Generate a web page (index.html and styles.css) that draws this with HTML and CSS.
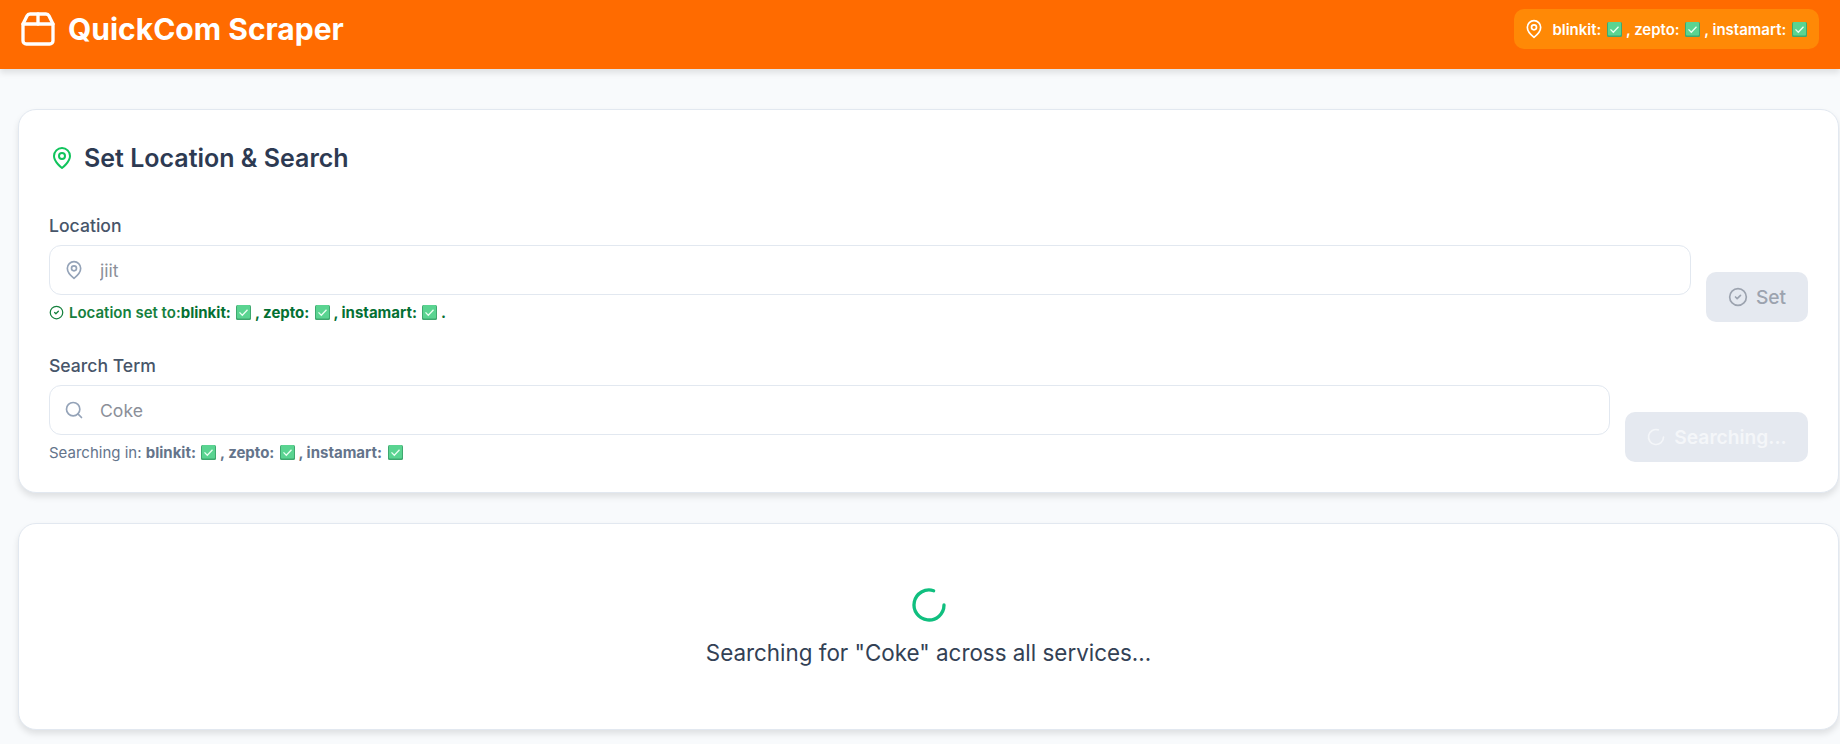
FILE: index.html
```html
<!DOCTYPE html>
<html lang="en">
<head>
    <meta charset="UTF-8">
    <meta name="viewport" content="width=device-width, initial-scale=1.0">
    <title>QuickCom Scraper</title>
    <link rel="stylesheet" href="styles.css">
</head>
<body>
    <!-- shared icons -->
    <svg class="icon-defs" aria-hidden="true">
        <symbol id="pin" viewBox="0 0 24 24"><path d="M20 10c0 6-8 12-8 12s-8-6-8-12a8 8 0 0 1 16 0Z"/><circle cx="12" cy="10" r="3"/></symbol>
        <symbol id="tick" viewBox="0 0 15 15">
            <rect x="0" y="0" width="15" height="15" rx="1.5" fill="#3fa86f" stroke="none"/>
            <rect x="1" y="0" width="13" height="13.5" rx="1" fill="#5ad491" stroke="none"/>
            <path d="M3.5 7.4 6.3 10.2 11.5 4.8" fill="none" stroke="#eafff2" stroke-width="1.3"/>
        </symbol>
    </svg>

    <header class="topbar">
        <div class="brand">
            <svg class="icon brand-icon" viewBox="0 0 24 24"><path d="M3 9h18v10a2 2 0 0 1-2 2H5a2 2 0 0 1-2-2V9Z"/><path d="m3 9 2.45-4.9A2 2 0 0 1 7.24 3h9.52a2 2 0 0 1 1.8 1.1L21 9"/><path d="M12 3v6"/></svg>
            <h1>QuickCom Scraper</h1>
        </div>
        <div class="status-badge">
            <svg class="icon badge-pin"><use href="#pin"/></svg>
            <span>blinkit: <svg class="tick"><use href="#tick"/></svg> , zepto: <svg class="tick"><use href="#tick"/></svg> , instamart: <svg class="tick"><use href="#tick"/></svg></span>
        </div>
    </header>

    <main class="content">
        <section class="card search-card">
            <h2><svg class="icon title-pin"><use href="#pin"/></svg>Set Location &amp; Search</h2>

            <div class="form-row">
                <div class="form-group">
                    <label for="location">Location</label>
                    <div class="input-wrap">
                        <svg class="icon input-icon"><use href="#pin"/></svg>
                        <input type="text" id="location" value="jiit" disabled>
                    </div>
                    <p class="hint success">
                        <svg class="icon hint-icon" viewBox="0 0 24 24"><circle cx="12" cy="12" r="10"/><path d="m9 12 2 2 4-4"/></svg>
                        <span>Location set to:<b>blinkit: <svg class="tick"><use href="#tick"/></svg> , zepto: <svg class="tick"><use href="#tick"/></svg> , instamart: <svg class="tick"><use href="#tick"/></svg> .</b></span>
                    </p>
                </div>
                <button class="btn btn-set" disabled>
                    <svg class="icon btn-icon" viewBox="0 0 24 24"><circle cx="12" cy="12" r="10"/><path d="m9 12 2 2 4-4"/></svg>
                    Set
                </button>
            </div>

            <div class="form-row">
                <div class="form-group">
                    <label for="term">Search Term</label>
                    <div class="input-wrap">
                        <svg class="icon input-icon" viewBox="0 0 24 24"><circle cx="11" cy="11" r="8"/><path d="m21 21-4.3-4.3"/></svg>
                        <input type="text" id="term" value="Coke" disabled>
                    </div>
                    <p class="hint"><span>Searching in: <b>blinkit: <svg class="tick"><use href="#tick"/></svg> , zepto: <svg class="tick"><use href="#tick"/></svg> , instamart: <svg class="tick"><use href="#tick"/></svg></b></span></p>
                </div>
                <button class="btn btn-search" disabled>
                    <svg class="icon btn-icon" viewBox="0 0 24 24"><path d="M21 12a9 9 0 1 1-6.219-8.56"/></svg>
                    Searching...
                </button>
            </div>
        </section>

        <section class="card loading-card">
            <svg class="icon spinner" viewBox="0 0 24 24"><path d="M21 12a9 9 0 1 1-6.219-8.56"/></svg>
            <p>Searching for "Coke" across all services...</p>
        </section>
    </main>
</body>
</html>
```

FILE: styles.css
```css
* {
    margin: 0;
    padding: 0;
    box-sizing: border-box;
}

body {
    font-family: Inter, 'Noto Sans', sans-serif;
    background: #f8fafc;
    color: #1e293b;
    height: 744px;
    overflow: hidden;
}

.icon-defs {
    display: none;
}

.icon {
    fill: none;
    stroke: currentColor;
    stroke-width: 2;
    stroke-linecap: round;
    stroke-linejoin: round;
    flex-shrink: 0;
}

.tick {
    display: inline-block;
    width: 15px;
    height: 15px;
    margin-left: 2px;
    vertical-align: -2px;
}

/* Header */
.topbar {
    display: flex;
    justify-content: space-between;
    align-items: center;
    height: 69px;
    padding: 0 21px 11px 18px;
    background: #ff6b00;
    color: #fff;
    box-shadow: 0 4px 6px rgba(0, 0, 0, 0.1);
}

.brand {
    display: flex;
    align-items: center;
    gap: 10px;
}

.brand-icon {
    width: 40px;
    height: 40px;
}

h1 {
    font-size: 30px;
    font-weight: 700;
}

.status-badge {
    display: flex;
    align-items: center;
    gap: 8px;
    height: 40px;
    padding: 0 12px 0 10px;
    background: #ff8906;
    border-radius: 10px;
    font-size: 15px;
    font-weight: 600;
}

.badge-pin {
    width: 20px;
    height: 20px;
}

/* Cards */
.content {
    display: flex;
    flex-direction: column;
    gap: 30px;
    padding: 40px 1px 0 18px;
}

.card {
    background: #fff;
    border: 1px solid #e2e8f0;
    border-radius: 18px;
    box-shadow: 0 4px 6px rgba(0, 0, 0, 0.1);
}

.search-card {
    height: 384px;
    padding: 33px 30px 0;
}

h2 {
    display: flex;
    align-items: center;
    gap: 10px;
    font-size: 25px;
    font-weight: 600;
    color: #2d3a52;
    margin-bottom: 41px;
}

.title-pin {
    width: 24px;
    height: 24px;
    margin-left: 1px;
    color: #10c45c;
}

.form-row {
    display: flex;
    align-items: flex-end;
    gap: 15px;
    margin-bottom: 32px;
}

.form-group {
    flex: 1;
}

label {
    display: block;
    margin-bottom: 7px;
    font-size: 17.6px;
    font-weight: 500;
    line-height: 24px;
    color: #475569;
}

.input-wrap {
    position: relative;
}

.input-icon {
    position: absolute;
    left: 15px;
    top: 15px;
    width: 20px;
    height: 20px;
    color: #94a3b8;
}

input[type="text"] {
    display: block;
    width: 100%;
    height: 50px;
    padding-left: 50px;
    border: 1px solid #e2e8f0;
    border-radius: 12px;
    background: #fff;
    font-family: inherit;
    font-size: 17.6px;
    color: #8b8f99;
}

.hint {
    display: flex;
    align-items: center;
    gap: 5px;
    height: 20px;
    margin-top: 7px;
    font-size: 15px;
    color: #64748b;
}

.hint b {
    font-weight: 700;
}

.hint.success {
    color: #15803d;
    font-weight: 600;
}

.hint.success b {
    color: #047033;
}

.hint-icon {
    width: 15px;
    height: 15px;
}

.btn {
    display: flex;
    align-items: center;
    justify-content: center;
    gap: 8px;
    height: 50px;
    border: none;
    border-radius: 10px;
    background: #e5e9f0;
    font-family: inherit;
    font-size: 19.2px;
    font-weight: 600;
}

.btn-icon {
    width: 20px;
    height: 20px;
}

.btn-set {
    width: 102px;
    color: #9ca3af;
    font-weight: 500;
}

.btn-search {
    width: 183px;
    color: #f4f6f9;
}

/* Loading state */
.loading-card {
    display: flex;
    flex-direction: column;
    align-items: center;
    height: 207px;
    padding-top: 61px;
}

.spinner {
    width: 40px;
    height: 40px;
    margin-bottom: 14px;
    color: #10bf7f;
}

.loading-card p {
    font-size: 22.4px;
    color: #334155;
}
```
